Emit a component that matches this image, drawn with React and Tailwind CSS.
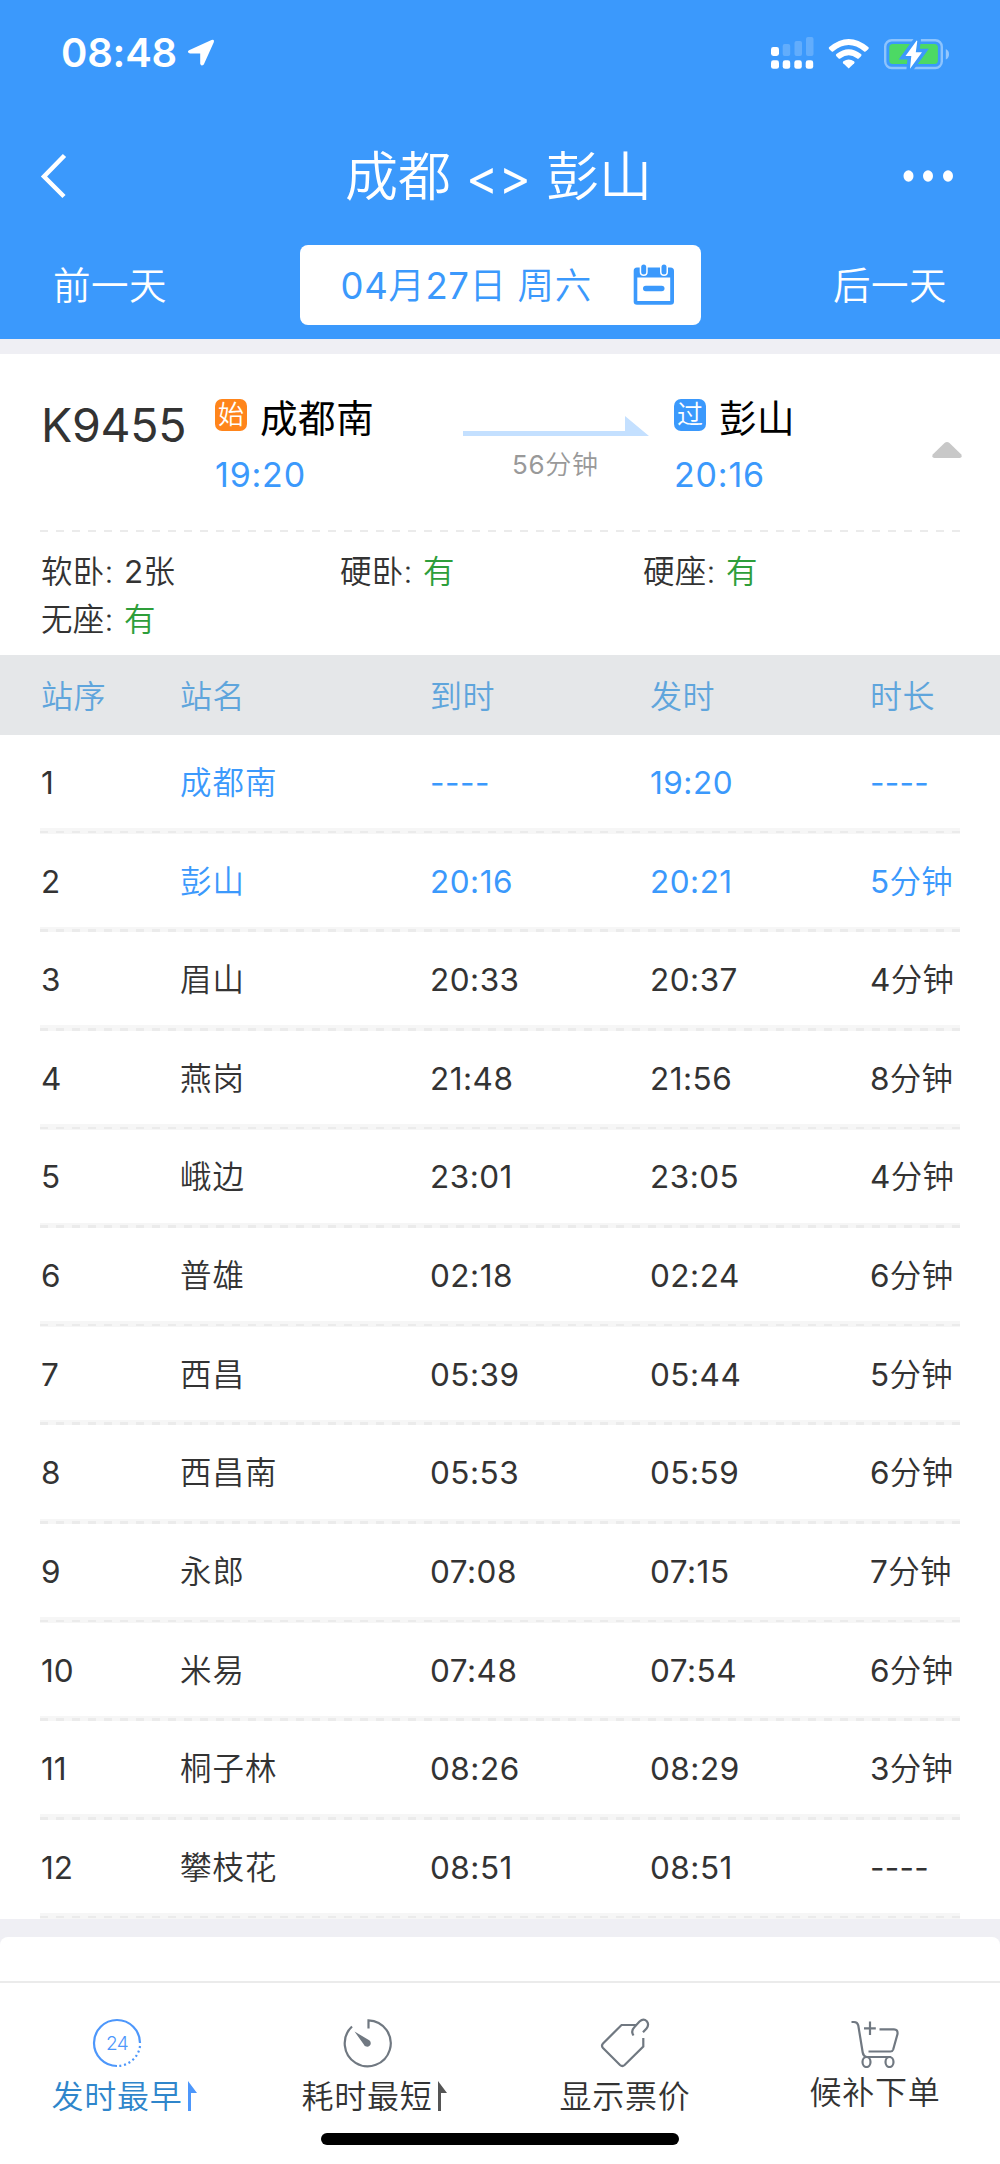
import React from "react";

const stops = [
  ["1", "成都南", "----", "19:20", "----"],
  ["2", "彭山", "20:16", "20:21", "5分钟"],
  ["3", "眉山", "20:33", "20:37", "4分钟"],
  ["4", "燕岗", "21:48", "21:56", "8分钟"],
  ["5", "峨边", "23:01", "23:05", "4分钟"],
  ["6", "普雄", "02:18", "02:24", "6分钟"],
  ["7", "西昌", "05:39", "05:44", "5分钟"],
  ["8", "西昌南", "05:53", "05:59", "6分钟"],
  ["9", "永郎", "07:08", "07:15", "7分钟"],
  ["10", "米易", "07:48", "07:54", "6分钟"],
  ["11", "桐子林", "08:26", "08:29", "3分钟"],
  ["12", "攀枝花", "08:51", "08:51", "----"],
];

const COLS = "grid grid-cols-[139px_250px_220px_220px_1fr] pl-[41px]";

// Digits and punctuation are set in the regular weight, Chinese characters slightly lighter.
function Mixed({ children }) {
  return children.match(/[\u4e00-\u9fff]+|[^\u4e00-\u9fff]+/g).map((part, i) => (
    <span key={i} className={/[\u4e00-\u9fff]/.test(part) ? "font-[350]" : "font-normal"}>{part}</span>
  ));
}

function Dashes() {
  return (
    <div className="h-[2.6px] bg-[repeating-linear-gradient(90deg,#ebebeb_0_8px,transparent_8px_16px)]" />
  );
}

function StatusBar() {
  return (
    <div className="flex h-[106px] items-center pl-[61px] pr-[50px]">
      <span className="text-[40px] font-semibold leading-none tracking-[-0.2px]">08:48</span>
      <svg className="ml-[10px]" width="28" height="28" viewBox="0 0 28 28">
        <path d="M2 11.2 L24.5 1 Q27.6 0 26.8 3.2 L16.8 25.4 Q14.2 28 13.2 24.8 V14.6 H3 Q-.6 13.2 2 11.2Z" fill="#fff" />
      </svg>
      <div className="flex-1" />
      <svg width="180" height="34" viewBox="770 35 180 34">
        <g fill="#fff">
          <rect x="771" y="46" width="8" height="9" rx="2.4" />
          <rect x="771" y="59.3" width="8" height="8.5" rx="2.4" />
          <rect x="782.7" y="59.3" width="7.5" height="8.5" rx="2.4" />
          <rect x="794.3" y="59.3" width="7.5" height="8.5" rx="2.4" />
          <rect x="805.7" y="59.3" width="7.5" height="8.5" rx="2.4" />
          <g opacity=".2">
            <rect x="782.7" y="43" width="7.5" height="12" rx="2" />
            <rect x="794.5" y="40" width="7.5" height="15" rx="2" />
            <rect x="806" y="36" width="7.5" height="19" rx="2" />
          </g>
          <path d="M829.3 46 Q848.7 29.8 868.2 46 Q869.4 47 868.2 48.2 L866 50.3 Q865 51.2 863.8 50.2 Q848.7 38 833.4 50.2 Q832.3 51.2 831.4 50.3 L829.3 48.2 Q828.2 47 829.3 46Z" />
          <path d="M836.4 53.1 Q848.7 43.3 861 53.1 Q862.2 54.2 861 55.3 L859 57.2 Q858 58.2 856.8 57.2 Q848.7 51.5 840.6 57.2 Q839.4 58.2 838.4 57.2 L836.4 55.3 Q835.2 54.2 836.4 53.1Z" />
          <path d="M843.4 60.2 Q848.7 57 854 60.2 Q855.2 61.2 854.2 62.3 L848.7 67.5 L843.2 62.3 Q842.2 61.2 843.4 60.2Z" />
        </g>
        <rect x="885.2" y="39.2" width="56.6" height="27.8" rx="6.5" fill="none" stroke="#fff" strokeOpacity=".42" strokeWidth="2.4" />
        <path d="M945.8 48 Q949 49.5 949 53.2 Q949 57 945.8 58.5Z" fill="#fff" fillOpacity=".45" />
        <rect x="889.3" y="43" width="48.6" height="20" rx="3.5" fill="#4cd964" />
        <path d="M916.7 39.5 L905.5 55 H911.3 L910 67.8 L922 51.2 H915.8 L917.3 40Z" fill="#fff" stroke="#3b99fc" strokeWidth="7" paintOrder="stroke" />
      </svg>
    </div>
  );
}

function CalendarIcon() {
  return (
    <svg width="42" height="42" viewBox="633 265 42 42">
      <path d="M637 268.5 H670.5 Q674 268.5 674 272 V302.5 Q674 305.7 670.5 305.7 H637 Q633.7 305.7 633.7 302.5 V272 Q633.7 268.5 637 268.5Z" fill="#3b99fc" />
      <rect x="637.3" y="278.5" width="32.9" height="23.5" fill="#fff" />
      <rect x="643" y="286.7" width="21.5" height="5.6" rx="2.8" fill="#3b99fc" />
      <rect x="641.2" y="265.5" width="5" height="10" rx="2.5" fill="#3b99fc" stroke="#fff" strokeWidth="3" paintOrder="stroke" />
      <rect x="661.5" y="265.5" width="5" height="10" rx="2.5" fill="#3b99fc" stroke="#fff" strokeWidth="3" paintOrder="stroke" />
    </svg>
  );
}

function Header() {
  return (
    <header className="h-[338.5px] bg-[#3b99fc] text-white">
      <StatusBar />
      <div className="flex h-[139px] items-center justify-between pl-[40px] pr-[46px]">
        <svg width="28" height="46" viewBox="0 0 28 46" fill="none" stroke="#fff" strokeWidth="4.5">
          <path d="M24.5 2.5 L4 23.5 L24 43.5" />
        </svg>
        <h1 className="mr-[-26px] flex items-center gap-[15px] pt-[3px] text-[53px] font-[350] leading-none">
          <span>成都</span>
          <span className="text-[49px] font-normal">&lt;&gt;</span>
          <span>彭山</span>
        </h1>
        <svg width="51" height="12" viewBox="0 0 51 12" fill="#fff">
          <ellipse cx="5.5" cy="6" rx="5" ry="5.8" />
          <ellipse cx="25" cy="6" rx="5" ry="5.8" />
          <ellipse cx="45" cy="6" rx="5" ry="5.8" />
        </svg>
      </div>
      <div className="flex h-[80px] items-center justify-between pl-[53px] pr-[53px] text-[37.5px] font-[350] tracking-[0.5px]">
        <span className="pt-[2px]">前一天</span>
        <div className="flex h-[80px] w-[401px] items-center justify-between rounded-[8px] bg-white pl-[41px] pr-[26px] text-[36.5px] text-[#3b99fc]">
          <span className="whitespace-nowrap pt-[2px] tracking-[0.6px]"><Mixed>04月27日 周六</Mixed></span>
          <CalendarIcon />
        </div>
        <span className="pt-[2px]">后一天</span>
      </div>
    </header>
  );
}

function Station({ tag, tagClass, name, time }) {
  return (
    <div>
      <div className="flex h-[50px] items-center">
        <span className={"mt-[-6px] flex h-[32px] w-[32px] items-center justify-center rounded-[7px] text-[26px] font-[350] leading-none text-white " + tagClass}>{tag}</span>
        <span className="ml-[13px] pt-[2px] text-[37.5px] font-[380] leading-none tracking-[0.6px] text-black">{name}</span>
      </div>
      <div className="mt-[7px] text-[34px] leading-[50px] tracking-[0.8px] text-[#3b99fc]">{time}</div>
    </div>
  );
}

function Seat({ label, value, ok }) {
  return (
    <div>
      {label}: <span className={ok ? "ml-px text-[#2e9e3a]" : "ml-px"}><Mixed>{value}</Mixed></span>
    </div>
  );
}

function TrainCard() {
  return (
    <section className="h-[301px] bg-white">
      <div className="flex h-[175.5px] pt-[39px]">
        <div className="w-[215px] pl-[41px] pt-[2px] text-[46.5px] leading-[60px] tracking-[-0.3px] text-[#333]">K9455</div>
        <div className="w-[248px]">
          <Station tag="始" tagClass="bg-[#ff851b]" name="成都南" time="19:20" />
        </div>
        <div className="w-[211px] pt-[22px]">
          <svg width="186" height="21" viewBox="0 0 186 21" fill="#c4e0ff">
            <path d="M0 16 H162 V1 L186 21 H0Z" />
          </svg>
          <div className="mt-[11px] pl-[49px] text-[26px] leading-[36px] tracking-[0.7px] text-[#999]"><Mixed>56分钟</Mixed></div>
        </div>
        <div className="w-[258px]">
          <Station tag="过" tagClass="bg-[#3b99fc]" name="彭山" time="20:16" />
        </div>
        <svg className="mt-[49px]" width="30" height="16" viewBox="0 0 30 16" fill="#c8c8c8">
          <path d="M12.5 1 Q15 -1 17.5 1 L29.3 12.5 Q30.5 16 27.5 16 H2.5 Q-.5 16 .7 12.5Z" />
        </svg>
      </div>
      <div className="mx-[40px]"><Dashes /></div>
      <div className="grid grid-cols-[299px_303px_1fr] pl-[41px] pt-[16px] text-[31.5px] font-[350] leading-[48px] tracking-[0.3px] text-[#333]">
        <Seat label="软卧" value="2张" />
        <Seat label="硬卧" value="有" ok />
        <Seat label="硬座" value="有" ok />
        <Seat label="无座" value="有" ok />
      </div>
    </section>
  );
}

function StopTable() {
  return (
    <section className="bg-white">
      <div className={COLS + " h-[80px] items-center bg-[#e5e7e9] pt-[3px] text-[32px] font-[350] tracking-[0.6px] text-[#5fa5dc]"}>
        <span>站序</span><span>站名</span><span>到时</span><span>发时</span><span>时长</span>
      </div>
      {stops.map((s, i) => (
        <div key={s[0]} className="flex h-[98.64px] flex-col">
          <div className={COLS + " flex-1 items-center pt-[2px] text-[31.5px] " + (i < 2 ? "text-[#3b99fc]" : "text-[#333]")}>
            <span className="text-[#333]">{s[0]}</span>
            <span className="font-[350] tracking-[1px]">{s[1]}</span>
            <span className="tracking-[0.5px]">{s[2]}</span>
            <span className="tracking-[0.5px]">{s[3]}</span>
            <span className="tracking-[0.3px]"><Mixed>{s[4]}</Mixed></span>
          </div>
          <div className="mx-[40px] h-[5.5px] bg-[#f6f6f6] pt-[2.6px]"><Dashes /></div>
        </div>
      ))}
    </section>
  );
}

function Flag({ className }) {
  return (
    <svg className={className} width="10" height="30" viewBox="0 0 10 30" fill="currentColor">
      <path d="M1 0 L10 12 H4 V30 H1Z" />
    </svg>
  );
}

function ClockIcon() {
  return (
    <svg width="50" height="50" viewBox="0 0 50 50" fill="none" stroke="#4d97fb" strokeWidth="2.2">
      <path d="M48 25 A23 23 0 1 0 25 48" />
      <path d="M48 28 A23 23 0 0 1 26 48" strokeDasharray="2 2.8" />
      <text x="25" y="32" fontSize="19" letterSpacing="-0.6" textAnchor="middle" fill="#4d97fb" stroke="none" fontWeight="350">24</text>
    </svg>
  );
}

function TimerIcon() {
  return (
    <svg width="50" height="50" viewBox="0 0 50 50" fill="none" stroke="#707881" strokeWidth="2.2">
      <path d="M26.5 10.5 V2.3 A23 23 0 1 1 10 8.5" />
      <path d="M12.5 13.5 L26.8 21.9 A3.6 3.6 0 1 1 21.8 26.4Z" fill="#707881" stroke="none" />
    </svg>
  );
}

function TagIcon() {
  return (
    <svg width="50" height="50" viewBox="600 2018 50 50" fill="none" stroke="#707881" strokeWidth="2.2">
      <path d="M636 2025 H621.5 L603 2043.5 Q601 2045.8 603 2048 L620 2065 Q622.3 2067 624.6 2065 L643.3 2046.5 V2038" />
      <path d="M633.5 2035.5 Q630.5 2031 634.5 2027 L639.5 2021.5 Q643.5 2018 646.8 2021.2 Q649.5 2024.5 646.5 2028.5 L643 2032.3" />
    </svg>
  );
}

function CartIcon() {
  return (
    <svg width="50" height="50" viewBox="849 2020 50 50" fill="none" stroke="#707881" strokeWidth="2.2">
      <path d="M850.5 2024 H853 Q856.5 2024 857.3 2027.5 L861.7 2054.5 Q862.3 2058 865.5 2059 H890" />
      <path d="M867.5 2053.5 H889.5 Q891.5 2053.5 892.2 2051.5 L896.5 2036 Q897 2031.3 893 2031.3 H878.5" />
      <path d="M869 2023.5 V2037 M863 2030.3 H874.8" />
      <ellipse cx="865.5" cy="2064" rx="4" ry="5" />
      <ellipse cx="888.5" cy="2064" rx="4" ry="5" />
    </svg>
  );
}

function Tab({ icon, label, flag, className = "", labelClass = "mt-[5px]", color = "text-[#333]", flagColor = "" }) {
  return (
    <div className={"flex w-[250px] flex-col items-center " + className}>
      {icon}
      <div className={"relative text-[32px] font-[350] leading-[48px] tracking-[0.8px] " + labelClass + " " + color}>
        {label}
        {flag && <Flag className={"absolute left-[136px] top-[8px] " + flagColor} />}
      </div>
    </div>
  );
}

export default function App() {
  return (
    <div className="h-[2164px] w-[1000px] overflow-hidden bg-[#efeff4] font-['Inter','Noto_Sans_CJK_SC',sans-serif]">
      <Header />
      <div className="h-[15.5px]" />
      <TrainCard />
      <StopTable />
      <div className="mt-[18.3px] h-[44px] rounded-t-[8px] bg-white" />
      <nav className="h-[183px] border-t-2 border-[#ebebeb] bg-white">
        <div className="flex h-[150px] pt-[35px]">
          <Tab icon={<ClockIcon />} label="发时最早" flag className="-ml-[8px]" color="text-[#2f86cb]" flagColor="text-[#4d97fb]" />
          <Tab icon={<TimerIcon />} label="耗时最短" flag flagColor="text-[#555]" />
          <Tab icon={<TagIcon />} label="显示票价" className="ml-[8px]" />
          <Tab icon={<CartIcon />} label="候补下单" labelClass="mt-px" />
        </div>
        <div className="mx-auto h-[12px] w-[358px] rounded-full bg-black" />
      </nav>
    </div>
  );
}
